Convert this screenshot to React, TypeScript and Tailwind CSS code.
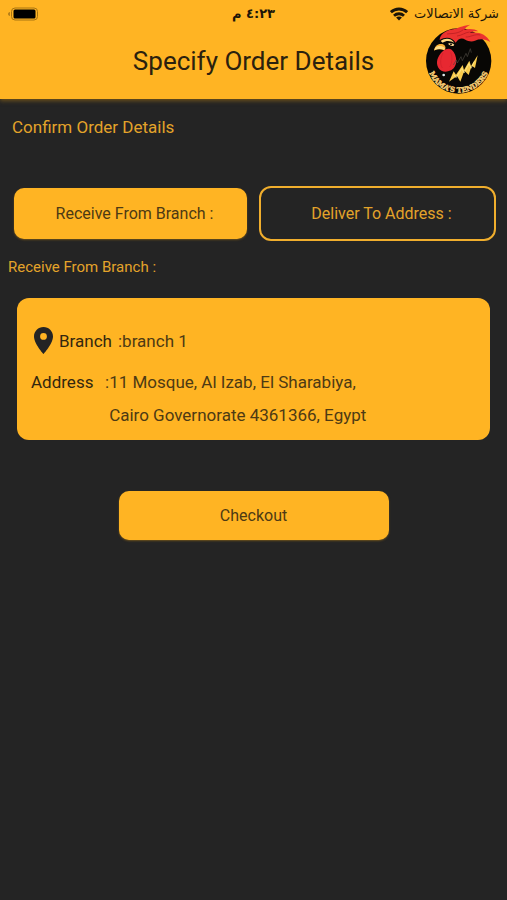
function BatteryIcon() {
  return (
    <svg className="h-[14px] w-[32px]" viewBox="0 0 32 14" aria-hidden="true">
      <path d="M1.5 5v4C.2 8.600 .2 5.400 1.500 5z" fill="#6b4a10" />
      <rect x="3.500" y="1" width="26" height="12" rx="3.500" fill="none" stroke="#a87412" />
      <rect x="5.500" y="2.500" width="22" height="9" rx="1.500" fill="#000" />
    </svg>
  );
}

function WifiIcon() {
  return (
    <svg className="h-[14px] w-[18px]" viewBox="0 0 18 14" aria-hidden="true">
      <g fill="none" stroke="#1c1508" strokeWidth="2.800">
        <path d="M.9 5.200C5.400 .9 12.600 .9 17.100 5.200" />
        <path d="M4 8.700c2.800-2.600 7.200-2.600 10 0" />
      </g>
      <path d="M9 13.500 6.100 10.600c1.600-1.500 4.200-1.500 5.800 0z" fill="#1c1508" />
    </svg>
  );
}

function PinIcon() {
  return (
    <svg className="h-[27px] w-[19px] shrink-0" viewBox="5 2 14 20" preserveAspectRatio="none" aria-hidden="true">
      <path
        d="M12 2C8.130 2 5 5.130 5 9c0 5.250 7 13 7 13s7-7.750 7-13c0-3.870-3.130-7-7-7zm0 9.500a2.500 2.500 0 0 1 0-5 2.500 2.500 0 0 1 0 5z"
        fill="#242424"
      />
    </svg>
  );
}

function Logo() {
  return (
    <svg className="h-[71px] w-[68px]" viewBox="30 20 204 213" role="img" aria-label="Mama's Tenders">
      <defs>
        <path id="logo-arc" d="M38 150A95 95 0 0 0 224 150" />
      </defs>
      <circle cx="131" cy="131" r="98" fill="#080705" />
      {/* comb */}
      <path
        d="M74 68C74 52 92 39 114 36C128 33 140 25 166 22C156 27 150 32 148 37C166 33 180 36 190 42C176 41 169 43 164 47C190 42 214 51 226 74C210 64 194 64 180 70C170 74 160 72 151 67C140 60 130 64 122 76C112 60 92 57 74 68Z"
        fill="#ec3230"
      />
      <path d="M96 50C112 48 128 50 145 37M126 56C140 55 150 45 164 44M152 59C166 60 178 49 196 53" fill="none" stroke="#b01a20" strokeWidth="2" />
      {/* face and beak */}
      <path d="M77 71C91 60 111 63 118 77C107 70 94 69 83 76Z" fill="#ffd783" />
      <path d="M57 100C59 86 68 78 82 80C91 83 95 92 88 99C79 95 68 94 57 100Z" fill="#f9ae36" />
      <path d="M60 92C68 84 80 84 90 92L88 98C80 94 70 94 58 98Z" fill="#ffdc85" />
      <path d="M99 79C105 76 113 77 118 82L115 86C108 86 103 84 99 79Z" fill="#f8d590" />
      <circle cx="108" cy="81" r="3" fill="#15100a" />
      {/* wattle */}
      <path
        d="M84 101C92 94 103 92 110 97C119 105 124 118 124 132C123 149 112 160 99 162C89 166 76 161 70 151C62 137 66 117 84 101Z"
        fill="#e72831"
      />
      <path d="M84 107C76 122 74 140 82 152M107 105C113 119 112 137 104 149" fill="none" stroke="#cf1f2b" strokeWidth="2" />
      <circle cx="86" cy="173" r="4" fill="#dce8ee" />
      {/* feathers */}
      <path d="M115 143L124 128L127 137L138 118L142 130L153 108L157 118L166 94L169 106" fill="none" stroke="#4a4640" strokeWidth="2" />
      <path
        d="M102 193L116 162L123 172L143 143L147 158L163 130L168 146L188 114L180 152L170 145L161 173L148 160L136 193L126 176Z"
        fill="#f8cb4c"
      />
      <path d="M117 172L123 181L141 153L147 167L162 139L168 153L178 132" fill="none" stroke="#fff0a0" strokeWidth="2" />
      <text
        fontSize="21"
        fill="#f5ca72"
        stroke="#f5ca72"
        strokeWidth="1.500"
        className="font-['DejaVu_Serif',serif] font-bold"
      >
        <textPath href="#logo-arc" startOffset="50%" textAnchor="middle">
          MAMA’S TENDERS
        </textPath>
      </text>
    </svg>
  );
}

function StatusBar() {
  return (
    <div className="grid h-[27px] grid-cols-3 items-center px-2 font-['DejaVu_Sans',sans-serif] text-[13px] leading-5 text-[#1c1508]">
      <BatteryIcon />
      <span dir="rtl" lang="ar" className="text-center font-bold">
        ٤:٢٣ م
      </span>
      <div className="flex items-center justify-end gap-[6px] whitespace-nowrap">
        <WifiIcon />
        <span dir="rtl" lang="ar">
          شركة الاتصالات
        </span>
      </div>
    </div>
  );
}

export default function App() {
  return (
    <div className="flex min-h-screen flex-col bg-[#242424] font-[Roboto,sans-serif] text-[17px] leading-6">
      <header className="relative bg-[#ffb423] shadow-[0_2px_4px_#6b501c]">
        <StatusBar />
        <h1 className="pt-[14px] pb-[18px] text-center text-[26px] leading-10 text-[#2b210e]">Specify Order Details</h1>
        <div className="absolute top-6 right-[14px]">
          <Logo />
        </div>
      </header>

      <main className="flex flex-col">
        <h2 className="px-3 pt-4 text-[#e3a32a]">Confirm Order Details</h2>

        <div className="mt-[47px] flex items-center gap-3 pr-[11px] pl-[14px] text-[16px]">
          <button
            type="button"
            className="h-[51px] flex-1 rounded-[10px] bg-[#ffb423] pl-2 text-[#4d3a14] shadow-[0_1px_2px_#6b501c]"
          >
            Receive From Branch :
          </button>
          <button
            type="button"
            className="h-[55px] flex-1 rounded-xl border-2 border-[#f0ae2d] pl-2 text-[#e3a32a]"
          >
            Deliver To Address :
          </button>
        </div>

        <h3 className="mt-[14px] px-2 text-[15px] text-[#e3a32a]">Receive From Branch :</h3>

        <section className="mx-[17px] mt-[19px] rounded-xl bg-[#ffb423] pt-[29px] pr-4 pb-2 pl-[14px] text-[#4d3a14]">
          <div className="flex items-center">
            <div className="mx-[3px]">
              <PinIcon />
            </div>
            <span className="ml-[3px] w-[59px] text-[#33270f]">Branch</span>
            <span>:branch 1</span>
          </div>
          <div className="mt-3 flex leading-[33px]">
            <span className="w-[74px] shrink-0 text-[#33270f]">Address</span>
            <span>:</span>
            <p className="max-w-[272px]">11 Mosque, Al Izab, El Sharabiya, Cairo Governorate 4361366, Egypt</p>
          </div>
        </section>

        <button
          type="button"
          className="mt-[51px] h-[49px] w-[270px] self-center rounded-[10px] bg-[#ffb423] text-[16px] text-[#4d3a14] shadow-[0_1px_2px_#6b501c]"
        >
          Checkout
        </button>
      </main>
    </div>
  );
}
